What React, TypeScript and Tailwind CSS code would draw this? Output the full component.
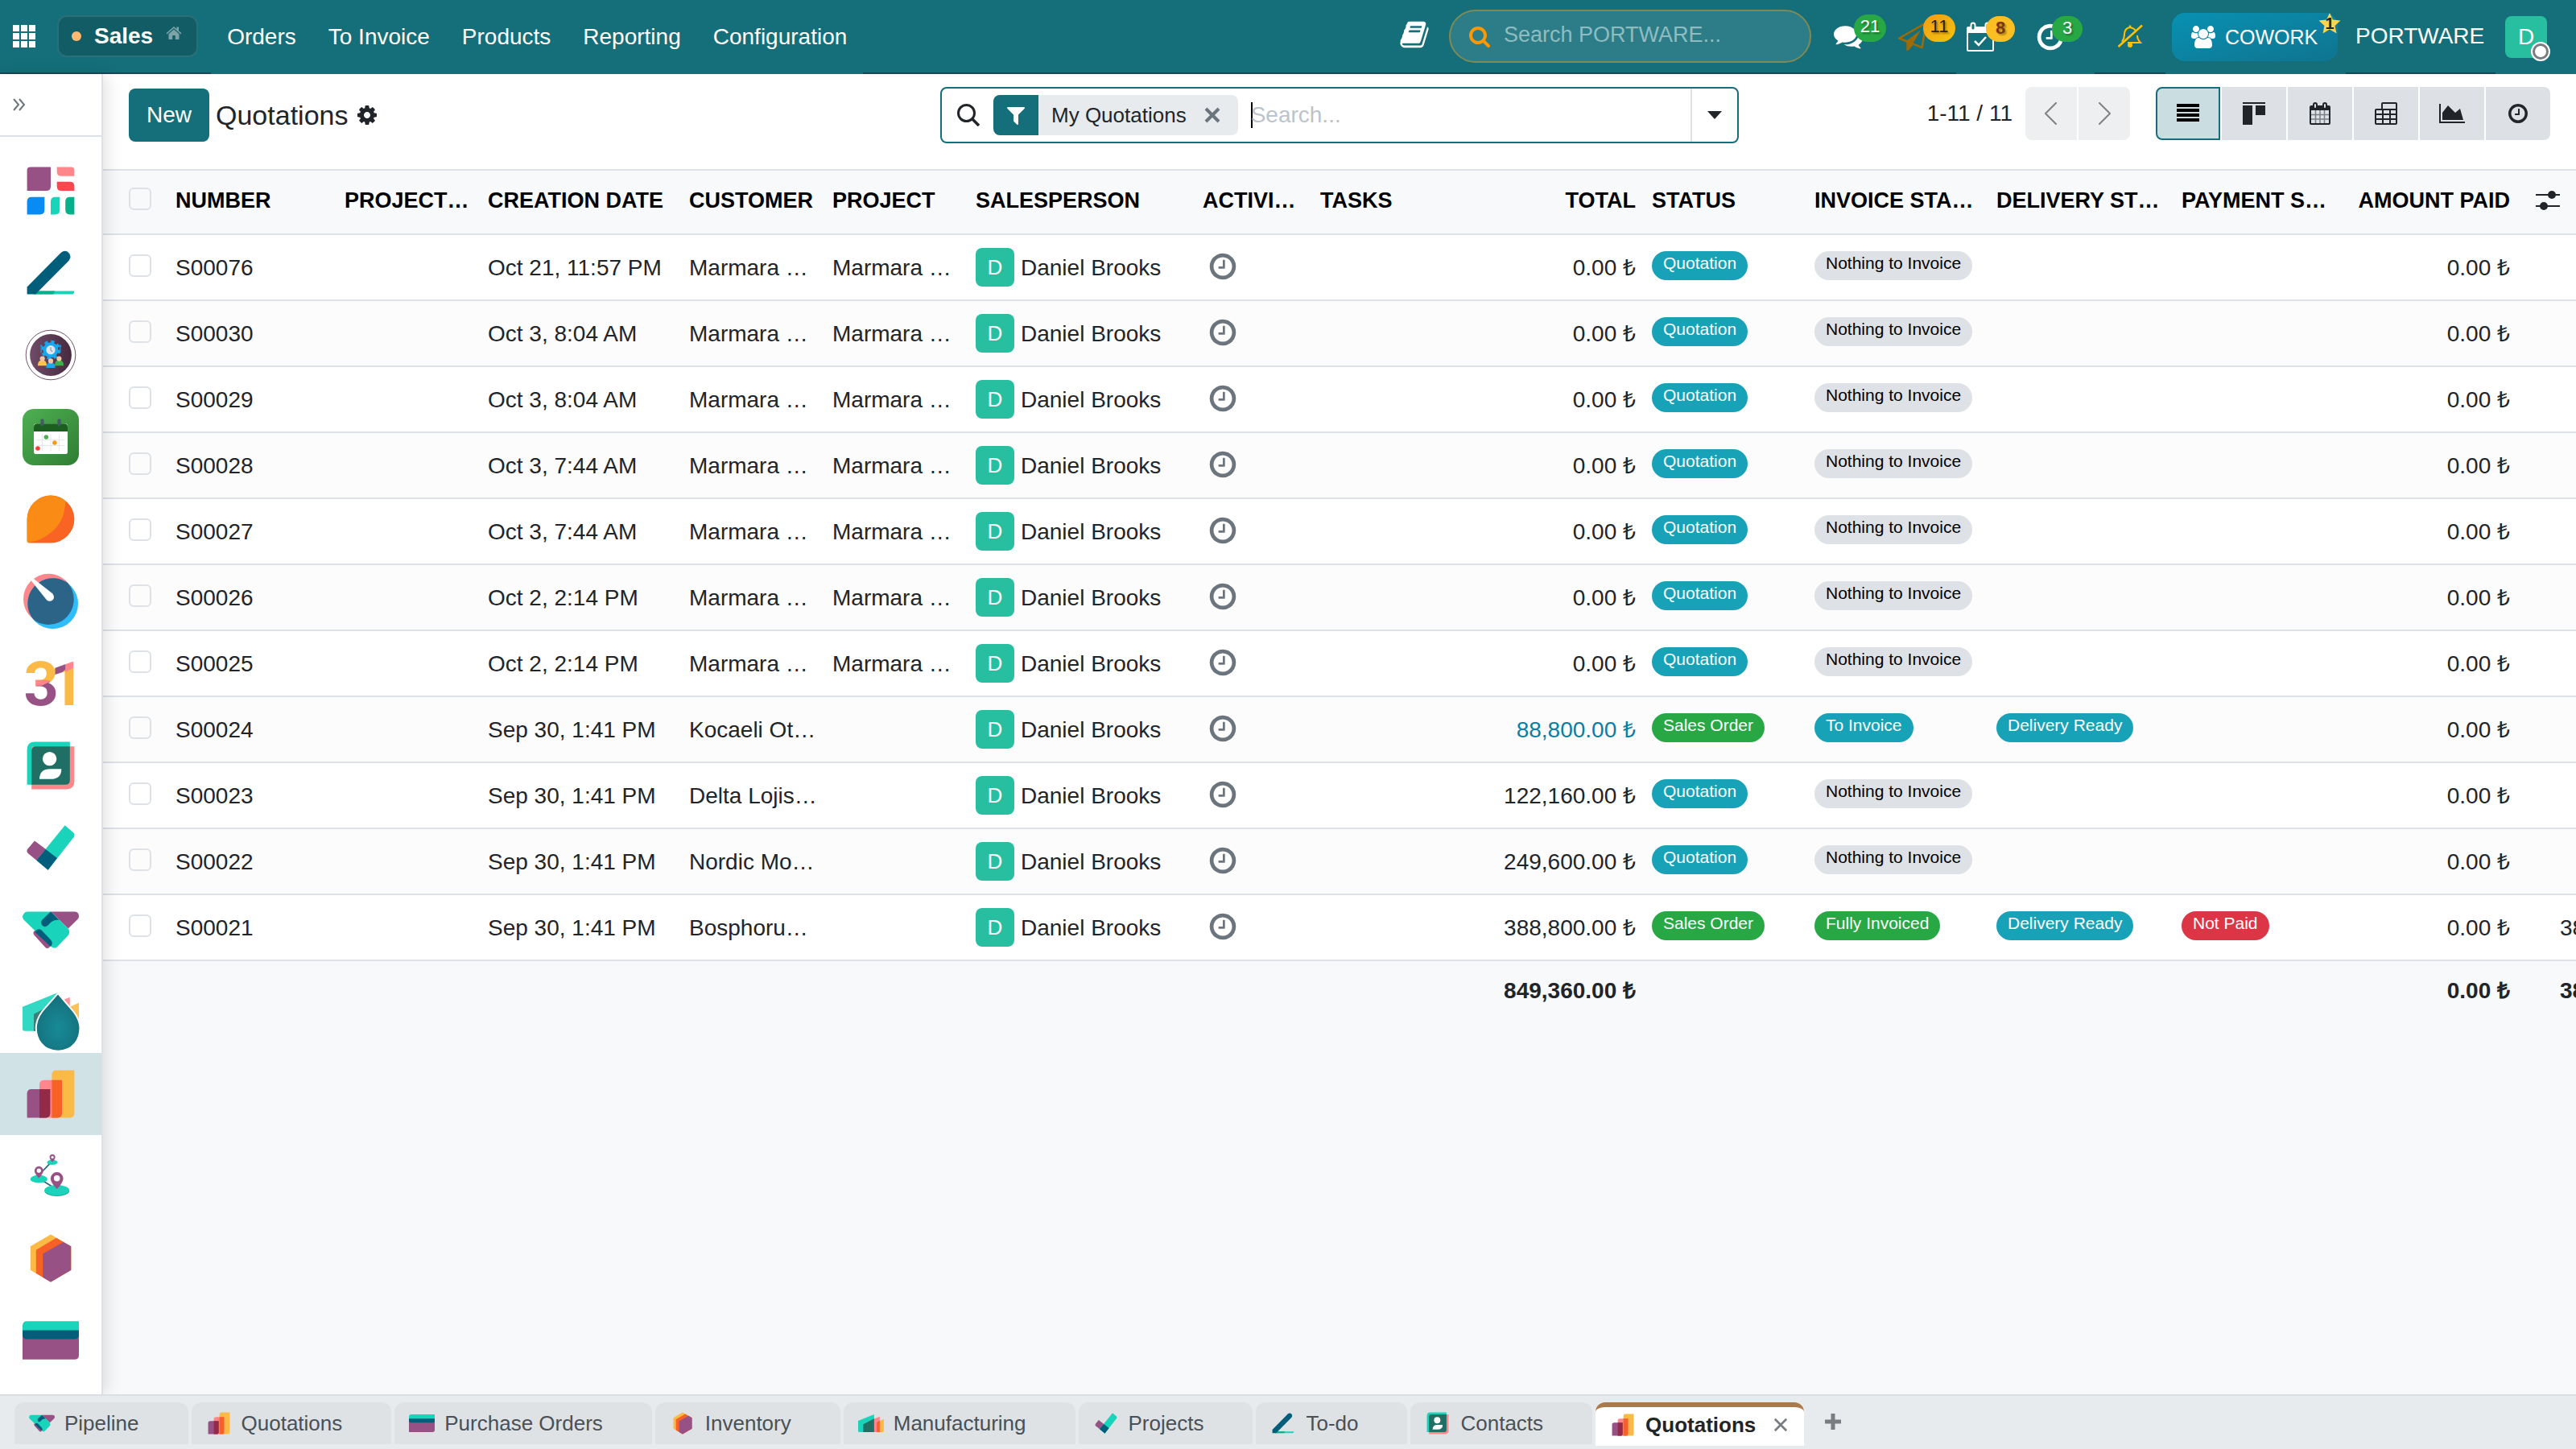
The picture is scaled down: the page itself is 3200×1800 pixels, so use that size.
import React from "react";

type IconProps = { className?: string };

/* ---------- single colour glyphs ---------- */

function Glyph({ d, box = "0 0 1792 1792", className = "" }: { d: string; box?: string; className?: string }) {
  return (
    <svg viewBox={box} fill="currentColor" className={className} aria-hidden="true">
      <path d={d} />
    </svg>
  );
}

const CLOCK =
  "M1024 544v448q0 14-9 23t-23 9h-320q-14 0-23-9t-9-23v-64q0-14 9-23t23-9h224v-352q0-14 9-23t23-9h64q14 0 23 9t9 23zm416 352q0-148-73-273t-198-198-273-73-273 73-198 198-73 273 73 273 198 198 273 73 273-73 198-198 73-273zm224 0q0 209-103 385.5t-279.5 279.5-385.5 103-385.5-103-279.5-279.5-103-385.5 103-385.5 279.5-279.5 385.5-103 385.5 103 279.5 279.5 103 385.5z";
const SEARCH =
  "M1216 832q0-185-131.5-316.5t-316.5-131.5-316.5 131.5-131.5 316.5 131.5 316.5 316.5 131.5 316.5-131.5 131.5-316.5zm512 832q0 52-38 90t-90 38q-54 0-90-38l-343-342q-179 124-399 124-143 0-273.5-55.5t-225-150-150-225-55.5-273.5 55.5-273.5 150-225 225-150 273.5-55.5 273.5 55.5 225 150 150 225 55.5 273.5q0 220-124 399l343 343q37 37 37 90z";
const FILTER =
  "M1595 295q17 41-14 70l-493 493v742q0 42-39 59-13 5-25 5-27 0-45-19l-256-256q-19-19-19-45v-486l-493-493q-31-29-14-70 17-39 59-39h1280q42 0 59 39z";
const COG =
  "M1152 896q0-106-75-181t-181-75-181 75-75 181 75 181 181 75 181-75 75-181zm512-109v222q0 12-8 23t-20 13l-185 28q-19 54-39 91 35 50 107 138 10 12 10 25t-9 23q-27 37-99 108t-94 71q-12 0-26-9l-138-108q-44 23-91 38-16 136-29 186-7 28-36 28h-222q-14 0-24.5-8.5t-11.5-21.5l-28-184q-49-16-90-37l-141 107q-10 9-25 9-14 0-25-11-126-114-165-168-7-10-7-23 0-12 8-23 15-21 51-66.5t54-70.5q-27-50-41-99l-183-27q-13-2-21-12.5t-8-23.5v-222q0-12 8-23t19-13l186-28q14-46 39-92-40-57-107-138-10-12-10-24 0-10 9-23 26-36 98.5-107.5t94.5-71.5q13 0 26 10l138 107q44-23 91-38 16-136 29-186 7-28 36-28h222q14 0 24.5 8.5t11.5 21.5l28 184q49 16 90 37l142-107q9-9 24-9 13 0 25 10 129 119 165 170 7 8 7 22 0 12-8 23-15 21-51 66.5t-54 70.5q26 50 41 98l183 28q13 2 21 12.5t8 23.5z";
const COMMENTS =
  "M1408 768q0 139-94 257t-256.5 186.5-353.5 68.5q-86 0-176-16-124 88-278 128-36 9-86 16h-3q-11 0-20.5-8t-11.5-21q-1-3-1-6.5t.5-6.5 2-6l2.5-5 3.5-5.5 4-5 4.5-5 4-4.5q5-6 23-25t26-29.5 22.5-29 25-38.5 20.5-44q-124-72-195-177t-71-224q0-139 94-257t256.5-186.5 353.5-68.5 353.5 68.5 256.5 186.5 94 257zm384 256q0 120-71 224.5t-195 176.5q10 24 20.5 44t25 38.5 22.5 29 26 29.5 23 25q1 1 4 4.5t4.5 5 4 5 3.5 5.5l2.5 5 2 6 .5 6.5-1 6.5q-3 14-13 22t-22 7q-50-7-86-16-154-40-278-128-90 16-176 16-271 0-472-132 58 4 88 4 161 0 309-45t264-129q125-92 192-212t67-254q0-77-23-152 129 71 204 178t75 230z";
const PLANE =
  "M1764 11q33 24 27 64l-256 1536q-5 29-32 45-14 8-31 8-11 0-24-5l-527-215-298 327q-18 21-47 21-14 0-23-4-19-7-30-23.5t-11-36.5v-452l-472-193q-37-14-40-55-3-39 32-59l1664-960q35-21 68 2zm-342 1499l221-1323-1434 827 336 137 863-639-478 797z";
const USERS =
  "M593 896q-162 5-265 128h-134q-82 0-138-40.5t-56-118.5q0-353 124-353 6 0 43.5 21t97.5 42.5 119 21.5q67 0 133-23-5 37-5 66 0 139 81 256zm1071 637q0 120-73 189.5t-194 69.5h-874q-121 0-194-69.5t-73-189.5q0-53 3.5-103.5t14-109 26.5-108.5 43-97.5 62-81 85.5-53.5 111.5-20q10 0 43 21.5t73 48 107 48 135 21.5 135-21.5 107-48 73-48 43-21.5q61 0 111.5 20t85.5 53.5 62 81 43 97.5 26.5 108.5 14 109 3.5 103.5zm-1024-1277q0 106-75 181t-181 75-181-75-75-181 75-181 181-75 181 75 75 181zm704 384q0 159-112.5 271.5t-271.5 112.5-271.5-112.5-112.5-271.5 112.5-271.5 271.5-112.5 271.5 112.5 112.5 271.5zm576 225q0 78-56 118.5t-138 40.5h-134q-103-123-265-128 81-117 81-256 0-29-5-66 66 23 133 23 59 0 119-21.5t97.5-42.5 43.5-21q124 0 124 353zm-128-609q0 106-75 181t-181 75-181-75-75-181 75-181 181-75 181 75 75 181z";
const BOOK =
  "M1703 478q40 57 18 129l-275 906q-19 64-76.5 107.5t-122.5 43.5h-923q-77 0-148.5-53.5t-99.5-131.5q-24-67-2-127 0-4 3-27t4-37q1-8-3-21.5t-3-19.5q2-11 8-21t16.5-23.5 16.5-23.5q23-38 45-91.5t30-91.5q3-10 .5-30t-.5-28q3-11 17-28t17-23q21-36 42-92t25-90q1-9-2.5-32t.5-28q4-13 22-30.5t22-22.5q19-26 42.5-84.5t27.5-96.5q1-8-3-25.5t-2-26.5q2-8 9-18t18-23 17-21q8-12 16.5-30.5t15-35 16-36 19.5-32 26.5-23.5 36-11.5 47.5 5.5l-1 3q38-9 51-9h761q74 0 114 56t18 130l-274 906q-36 119-71.5 153.5t-128.5 34.5h-869q-27 0-38 15-11 16-1 43 24 70 144 70h923q29 0 56-15.5t35-41.5l300-987q7-22 5-57 38 15 59 43zm-1064 2q-4 13 2 22.5t20 9.5h608q13 0 25.5-9.5t16.5-22.5l21-64q4-13-2-22.5t-20-9.5h-608q-13 0-25.5 9.5t-16.5 22.5zm-83 256q-4 13 2 22.5t20 9.5h608q13 0 25.5-9.5t16.5-22.5l21-64q4-13-2-22.5t-20-9.5h-608q-13 0-25.5 9.5t-16.5 22.5z";
const AREA = "M2048 1536v128h-2048v-1536h128v1408h1920zm-384-1024l256 896h-1664v-576l448-576 576 576z";

function Magnifier({ className }: IconProps) {
  return (
    <svg viewBox="0 0 28 28" fill="none" stroke="currentColor" strokeWidth="3" className={className} aria-hidden="true">
      <circle cx="11.500" cy="11.500" r="10" />
      <path d="M18.500 18.500L27 27" strokeWidth="3.500" />
    </svg>
  );
}

function CalendarCheck({ className }: IconProps) {
  return (
    <svg viewBox="0 0 36 38" className={className} aria-hidden="true">
      <path fill="currentColor" fillRule="evenodd" d="M3 6h30q2 0 2 2v27q0 2-2 2H3q-2 0-2-2V8q0-2 2-2zm0 8v21h30V14z" />
      <rect x="6.500" y="1.500" width="5" height="9" rx="2.500" fill="#146f7a" stroke="currentColor" strokeWidth="2" />
      <rect x="24.500" y="1.500" width="5" height="9" rx="2.500" fill="#146f7a" stroke="currentColor" strokeWidth="2" />
      <path d="M11 24l5 5 9-10" fill="none" stroke="currentColor" strokeWidth="2.500" />
    </svg>
  );
}

function BellSlash({ className }: IconProps) {
  return (
    <svg viewBox="0 0 32 30" fill="none" stroke="currentColor" strokeWidth="2" className={className} aria-hidden="true">
      <path d="M6 22q3-4 3-9 0-8 7-9 5 1 7 4M25 14q0 5 4 9H13" />
      <path d="M16 4V1.500M1.500 28L31 1.500" strokeWidth="2.500" />
      <circle cx="16" cy="26" r="3" fill="currentColor" stroke="none" />
    </svg>
  );
}

function Home({ className }: IconProps) {
  return (
    <svg viewBox="0 0 20 18" fill="currentColor" className={className} aria-hidden="true">
      <path d="M10 4.500l6.500 5.800V17h-4.700v-5H8.200v5H3.500v-6.700z" />
      <path d="M10 1l3.500 3V1.500h2.500v4.700L19.500 9.300l-1 1.200L10 3 1.500 10.500l-1-1.200z" />
    </svg>
  );
}

function AppsGrid({ className }: IconProps) {
  return (
    <svg viewBox="0 0 28 28" fill="currentColor" className={className} aria-hidden="true">
      {[0, 10, 20].map((y) => [0, 10, 20].map((x) => <rect key={`${x}-${y}`} x={x} y={y} width="8" height="8" />))}
    </svg>
  );
}

function ListView({ className }: IconProps) {
  return (
    <svg viewBox="0 0 28 28" fill="#000" className={className} aria-hidden="true">
      {[2, 8, 14, 20].map((y) => <rect key={y} y={y} width="28" height="4" />)}
    </svg>
  );
}

function KanbanView({ className }: IconProps) {
  return (
    <svg viewBox="0 0 28 28" fill="currentColor" className={className} aria-hidden="true">
      <path d="M0 0h28v2H0zM0 4h12v24H0zM16 4h12v12H16z" />
    </svg>
  );
}

function CalendarView({ className }: IconProps) {
  return (
    <svg viewBox="0 0 28 28" className={className} aria-hidden="true">
      <path fill="currentColor" fillRule="evenodd" d="M3 4h22q2 0 2 2v20q0 2-2 2H3q-2 0-2-2V6q0-2 2-2zm0 6v16h22V10z" />
      <path d="M8.500 10v16M14 10v16M19.500 10v16M3 15.500h22M3 21h22" stroke="#7a7f85" strokeWidth="1.500" />
      <rect x="6" y="1" width="4" height="7" rx="2" fill="#dde1e6" stroke="currentColor" strokeWidth="2" />
      <rect x="18" y="1" width="4" height="7" rx="2" fill="#dde1e6" stroke="currentColor" strokeWidth="2" />
    </svg>
  );
}

function PivotView({ className }: IconProps) {
  return (
    <svg viewBox="0 0 28 28" fill="none" stroke="currentColor" strokeWidth="2" className={className} aria-hidden="true">
      <path d="M9 9V2q0-1 1-1h16q1 0 1 1v24q0 1-1 1H2q-1 0-1-1V10q0-1 1-1h25M1 15h26M1 21h26M10 9v18M19 9v18" />
    </svg>
  );
}

function Sliders({ className }: IconProps) {
  return (
    <svg viewBox="0 0 30 26" fill="currentColor" className={className} aria-hidden="true">
      <path d="M0 5h30v2H0zM0 19h30v2H0z" />
      <ellipse cx="20" cy="6" rx="5" ry="5" />
      <ellipse cx="10" cy="20" rx="5" ry="5" />
    </svg>
  );
}

function Chevron({ flip = false }: { flip?: boolean }) {
  return (
    <svg viewBox="0 0 16 28" fill="none" stroke="#808285" strokeWidth="2" strokeLinecap="round" className="h-7 w-4" aria-hidden="true">
      <path d={flip ? "M2 1l13 13L2 27" : "M14 1L1 14l13 13"} />
    </svg>
  );
}

function Cross({ className }: IconProps) {
  return (
    <svg viewBox="0 0 20 20" stroke="currentColor" className={className} aria-hidden="true">
      <path d="M2 2l16 16M18 2L2 18" />
    </svg>
  );
}

/* ---------- application icons ---------- */

const app = (children: React.ReactNode) =>
  function AppIcon({ className }: IconProps) {
    return (
      <svg viewBox="0 0 50 50" className={className} overflow="visible" aria-hidden="true">
        {children}
      </svg>
    );
  };

const Dashboards = app(
  <>
    <path fill="#985184" d="M7 4h18v17q0 4-4 4H4V7q0-3 3-3z" />
    <path fill="#ff868b" d="M30.500 4H43q3 0 3 3v5H34.500q-4 0-4-4z" />
    <path fill="#ff464e" d="M30.500 17H42q4 0 4 4v4H34.500q-4 0-4-4z" />
    <path fill="#088bf5" d="M8 30.500h11.500V42q0 4-4 4H4V34.500q0-4 4-4z" />
    <path fill="#1ad3bb" d="M29 30.500h4V42q0 4-4 4h-4V34.500q0-4 4-4z" />
    <path fill="#05b08a" d="M42 30.500h4V46h-4q-4 0-4-4v-7.500q0-4 4-4z" />
  </>
);

const Todo = app(
  <>
    <path fill="#1ad3bb" d="M12 41h34q0 3-3 3H10z" />
    <path fill="#05b08a" d="M12 41h16.500q0 3-3 3H10z" />
    <path fill="#005e7a" d="M4 37.500L34 7.200q4-3.200 7 0 3 3.500 0 7L11.500 44H4z" />
  </>
);

const Workforce = app(
  <>
    <defs>
      <linearGradient id="workforce-disc">
        <stop offset="0" stopColor="#704c67" />
        <stop offset="1" stopColor="#46293f" />
      </linearGradient>
    </defs>
    <circle cx="25" cy="25" r="22" fill="#fff" stroke="#70506a" strokeWidth="0.700" />
    <circle cx="25" cy="25" r="18.500" fill="url(#workforce-disc)" />
    <circle cx="25" cy="20.500" r="7.300" fill="none" stroke="#18a8ef" strokeWidth="2.600" strokeDasharray="3 2.730" />
    <circle cx="25" cy="20.500" r="6.800" fill="#18a8ef" />
    <circle cx="25" cy="20.500" r="4" fill="#dfe5ea" />
    <path d="M25 18v2.500l1.500 1.500" fill="none" stroke="#8b98a5" strokeWidth="0.800" />
    <path d="M16.500 17v6M33.500 17v6" stroke="#2196d8" strokeWidth="0.900" />
    <path d="M15.200 17.500l1.300-2 1.300 2zM32.200 17.500l1.300-2 1.300 2z" fill="#2196d8" />
    <path fill="#fdc34f" d="M13.500 34.500q0-5 4-5t4 5z" />
    <path fill="#35b44a" d="M28.500 34.500q0-5 4-5t4 5z" />
    <path fill="#18a8ef" d="M21 36.500q0-5 4-5t4 5z" />
    <circle cx="17.600" cy="28.300" r="2.200" fill="#f1c8a5" />
    <circle cx="32.400" cy="28.300" r="2.200" fill="#f1c8a5" />
    <circle cx="25" cy="30.300" r="2.200" fill="#f1c8a5" />
  </>
);

const Planner = app(
  <>
    <defs>
      <linearGradient id="planner-tile" x1="0" y1="0" x2="1" y2="1">
        <stop offset="0" stopColor="#4fb053" />
        <stop offset="1" stopColor="#2e7d32" />
      </linearGradient>
    </defs>
    <rect width="50" height="50" rx="10" fill="url(#planner-tile)" />
    <rect x="10" y="13" width="30" height="27" rx="2" fill="#fff" />
    <path fill="#1b5e20" d="M10 20v-4q0-3 3-3h24q3 0 3 3v4z" />
    <path d="M12.500 27.500h25M12.500 32.500h25M17.500 22.500v15M25 22.500v15M32.500 22.500v15" stroke="#e4e6e8" strokeWidth="0.700" />
    <rect x="16" y="9" width="3" height="6" rx="1" fill="#455a64" />
    <rect x="31" y="9" width="3" height="6" rx="1" fill="#455a64" />
    <circle cx="21" cy="25" r="2" fill="#4caf50" />
    <circle cx="28.500" cy="30" r="2" fill="#ff9800" />
    <circle cx="13.500" cy="35" r="2" fill="#f44336" />
  </>
);

const Discuss = app(
  <>
    <path fill="#f96425" d="M25 4a21 21 0 0 1 0 42H6q-2 0-2-2V25A21 21 0 0 1 25 4z" />
    <path fill="#fa8b14" d="M25 4q7 0 13 4.500Q38 26 26 36 17 44 5 45.800 4 45 4 44V25A21 21 0 0 1 25 4z" />
  </>
);

const Gauge = app(
  <>
    <circle cx="23.100" cy="23" r="22.400" fill="#ff868b" />
    <circle cx="26.900" cy="27" r="22.400" fill="#2ebcfa" />
    <path fill="#2c6488" d="M4.700 24.500A22.400 22.400 0 0 1 40 8.600 22.400 22.400 0 0 1 45.400 25.500 22.400 22.400 0 0 1 10 41.400 22.400 22.400 0 0 1 4.700 24.500z" />
    <path d="M7.500 6.500l2-1.800L26.500 18q2.500 3 .5 5.500-2.500 2.500-5.500.5z" fill="#fff" />
  </>
);

const Calendar = app(
  <>
    <defs>
      <clipPath id="calendar-day">
        <text x="1" y="44" fontSize="54" fontWeight="700" fontFamily="Roboto, sans-serif">3</text>
        <text x="24" y="44" fontSize="54" fontWeight="700" fontFamily="Roboto, sans-serif">1</text>
      </clipPath>
    </defs>
    <g clipPath="url(#calendar-day)">
      <rect width="50" height="50" fill="#fbb945" />
      <path fill="#985184" d="M0 32h12V27l10-4 8 2v25H0z" />
      <path fill="#ff868b" d="M8 22h14l3 1-8 4H8z" />
      <path fill="#985184" d="M29 0h10v12l-10 8z" />
      <path fill="#ff868b" d="M38 0h12v9l-12 6z" />
    </g>
  </>
);

const Contacts = app(
  <>
    <path fill="#1ad3bb" d="M11 4h31v38H4V11q0-7 7-7z" />
    <path fill="#ff868b" d="M8 8h38v31q0 7-7 7H8z" />
    <path fill="#1f6f65" d="M12 8h30v30q0 4-4 4H8V12q0-4 4-4z" />
    <circle cx="24" cy="19" r="6.200" fill="#fff" />
    <path fill="#fff" d="M15 37q0-9 9.500-9h10q0 9-9.500 9z" />
  </>
);

const Projects = app(
  <>
    <path fill="#1ad3bb" d="M37.600 5.200l7.600 6.600q1.500 1.500.5 3.500L22.600 44.800l-10.200-8.600z" />
    <path fill="#985184" d="M10.700 18.900l10 7.600-8.300 9.700-7.600-6.200q-1.500-1.500-.5-3.500z" />
    <path fill="#005e7a" d="M20.500 26.500l10.200 7.800-8.100 10.500-10.200-8.600z" />
  </>
);

const Pipeline = app(
  <>
    <path fill="#985184" d="M25 9h21q4 0 4 4 0 1.500-1 2.500l-8.500 8.500z" />
    <path d="M12.500 28l9.500 10.500" stroke="#985184" strokeWidth="5.500" strokeLinecap="round" />
    <path fill="#1ad3bb" d="M4 9h21l15.500 15q2 3 0 6L30.500 40.300q-2 1.700-4.500 0L1 16q-2-3 0-5 1-2 3-2z" />
    <path fill="#005e7a" d="M25 9l7.500 7.500q-4-1-7 1.500l-3 3q-3 2.500-5 0-2-2.500 0-5z" />
    <path fill="#005e7a" d="M11 27q2.500-4 6-1.500l8 8.500q2.500 3 0 6z" />
  </>
);

const Manufacturing = app(
  <>
    <path fill="#fbb945" d="M36 23l14-6v23q0 2-2 2H36z" />
    <path fill="#ff868b" d="M22 20l20-8v30H22z" />
    <path fill="#f86126" d="M36 23l6-3v22h-6z" />
    <path fill="#1ad3bb" d="M0 20.500L31 8v34H2q-2 0-2-2z" />
    <path fill="#1f6f65" d="M10 27l21-11v26H10z" />
  </>
);

const Sales = app(
  <>
    <path fill="#fbb945" d="M30 4h16v38q0 4-4 4H26V8q0-4 4-4z" />
    <path fill="#ff868b" d="M19 12.700h16V42q0 4-4 4H15V16.700q0-4 4-4z" />
    <path fill="#f86126" d="M26 12.700h9V42q0 4-4 4h-5z" />
    <path fill="#985184" d="M8 20.700h16.500V42q0 4-4 4H4V24.700q0-4 4-4z" />
    <path fill="#932b48" d="M15 20.700h9.500V42q0 4-4 4H15z" />
  </>
);

const Routes = app(
  <>
    <path d="M14.500 24L26 12M14.500 27l16 10" stroke="#2c6488" strokeWidth="1.200" />
    <ellipse cx="26.400" cy="12.800" rx="4.700" ry="2.200" fill="#1ad3bb" />
    <ellipse cx="14.500" cy="27.600" rx="7.600" ry="3.500" fill="#1ad3bb" />
    <ellipse cx="30.500" cy="38.200" rx="11" ry="4.600" fill="#17a593" />
    <ellipse cx="30.500" cy="37.500" rx="11" ry="4.600" fill="#1ad3bb" />
    <path fill="#985184" fillRule="evenodd" d="M26.500 12.500q-2.500-2.500-2.500-4.200a2.500 2.500 0 0 1 5 0q0 1.700-2.500 4.200zm0-5.400a1.200 1.200 0 1 0 0 2.400 1.200 1.200 0 0 0 0-2.400z" />
    <path fill="#985184" fillRule="evenodd" d="M14.500 26.800q-3.900-4-3.900-6.600a3.900 3.900 0 0 1 7.800 0q0 2.600-3.900 6.600zm0-8.600a1.900 1.900 0 1 0 0 3.800 1.900 1.900 0 0 0 0-3.800z" />
    <path fill="#985184" fillRule="evenodd" d="M30.500 36.500q-5.600-6-5.600-9.400a5.600 5.600 0 0 1 11.200 0q0 3.400-5.600 9.400zm0-12.200a2.700 2.700 0 1 0 0 5.400 2.700 2.700 0 0 0 0-5.400z" />
  </>
);

const Inventory = app(
  <>
    <path fill="#fbb945" d="M25 4l18 10.500v21L25 46 7 35.500v-21z" />
    <path fill="#f86126" d="M30 7l13 7.500v21L25 46l-13-7.600V17.700z" />
    <path fill="#985184" d="M36.200 10.700L43 14.500v21L25 46l-7-4V21z" />
  </>
);

const Purchase = app(
  <>
    <path fill="#985184" d="M0 16h50v22q0 4-4 4H0z" />
    <path fill="#1ad3bb" d="M4 8h46v10H0v-6q0-4 4-4z" />
    <path fill="#005e7a" d="M0 16h50v4q0 4-4 4H4q-4 0-4-4z" />
  </>
);

const ManufacturingDrop = app(
  <>
    <defs>
      <radialGradient id="drop-fill" cx="0.500" cy="0.600" r="0.600">
        <stop offset="0" stopColor="#178a97" />
        <stop offset="1" stopColor="#146f7a" />
      </radialGradient>
    </defs>
    <path fill="#fbc25c" d="M36 23l14-6v23q0 2-2 2H36z" />
    <path fill="#ff959a" d="M22 20l20-8v30H22z" />
    <path fill="#31d8c3" d="M0 20.500L31 8v34H2q-2 0-2-2z" />
    <path fill="#3b8078" d="M10 27l21-11v26H10z" />
    <path fill="url(#drop-fill)" stroke="#fff" strokeWidth="1.400" d="M31.400 8.500q2 2.500 10.600 12.500 9 9.500 9 18.500 0 8-4.500 13.500-5.500 6.800-15 6.800t-15-6.800Q12 47.500 12 39.500 12 30 20.500 21q8.900-10 10.900-12.500z" />
  </>
);

const SIDEBAR: { name: string; Icon: React.FC<IconProps> }[] = [
  { name: "Dashboards", Icon: Dashboards },
  { name: "To-do", Icon: Todo },
  { name: "Workforce", Icon: Workforce },
  { name: "Planner", Icon: Planner },
  { name: "Discuss", Icon: Discuss },
  { name: "Gauge", Icon: Gauge },
  { name: "Calendar", Icon: Calendar },
  { name: "Contacts", Icon: Contacts },
  { name: "Projects", Icon: Projects },
  { name: "CRM", Icon: Pipeline },
  { name: "Manufacturing", Icon: ManufacturingDrop },
  { name: "Sales", Icon: Sales },
  { name: "Routes", Icon: Routes },
  { name: "Inventory", Icon: Inventory },
  { name: "Purchase", Icon: Purchase },
];

const TABS: { name: string; Icon: React.FC<IconProps> }[] = [
  { name: "Pipeline", Icon: Pipeline },
  { name: "Quotations", Icon: Sales },
  { name: "Purchase Orders", Icon: Purchase },
  { name: "Inventory", Icon: Inventory },
  { name: "Manufacturing", Icon: Manufacturing },
  { name: "Projects", Icon: Projects },
  { name: "To-do", Icon: Todo },
  { name: "Contacts", Icon: Contacts },
];

/* ---------- header ---------- */

function Header() {
  return (
    <header className="flex h-[92px] shrink-0 bg-[#146f7a] text-[28px] text-white">
      <div className="flex items-center gap-[27px] border-b-2 border-[#0f4b53] pr-4 pl-4">
        <button aria-label="Apps"><AppsGrid className="size-7" /></button>
        <a href="#sales" className="flex h-[52px] items-center gap-4 rounded-xl border-2 border-[#2a6f78] bg-[#115c65] pr-[18px] pl-4 font-bold">
          <span className="size-3 rounded-full bg-[#ffb870]" />
          Sales
          <Home className="mb-2 h-[18px] w-5 text-[#7ba3a8]" />
        </a>
      </div>
      <nav className="flex">
        {["Orders", "To Invoice", "Products", "Reporting", "Configuration"].map((m) => (
          <button key={m} className="h-full px-5">{m}</button>
        ))}
      </nav>
      <div className="flex grow items-center justify-end border-b-2 border-[#0f4b53]">
        <button aria-label="Documentation" className="mr-6 mb-1"><Glyph d={BOOK} className="size-[38px]" /></button>
        <label className="mr-4 flex h-[66px] w-[450px] items-center gap-4 rounded-[33px] border-2 border-[#7f8a55] bg-[#2c7d87] pl-[22px]">
          <Glyph d={SEARCH} className="size-7 shrink-0 text-[#ff9800]" />
          <input aria-label="Search PORTWARE" placeholder="Search PORTWARE..." className="w-full min-w-0 bg-transparent pb-1 text-[27px] outline-none placeholder:text-[#8fbcc1]" />
        </label>
        <button aria-label="Messages" className="relative flex h-full w-20 items-center pl-3">
          <Glyph d={COMMENTS} className="size-9" />
          <span className="absolute top-[18px] left-[37px] flex h-[34px] w-10 items-center justify-center rounded-full bg-[#28a745] pb-1 text-[22px] [text-shadow:2px_2px_2px_rgb(0_0_0/0.3)]">21</span>
        </button>
        <button aria-label="Requests" className="relative flex h-full w-[84px] items-center pl-3">
          <Glyph d={PLANE} className="size-9 text-[#9c6a06]" />
          <span className="absolute top-[18px] left-[43px] flex h-[34px] w-10 items-center justify-center rounded-full bg-gradient-to-br from-[#f39c12] to-[#f1c40f] pb-1 text-[22px] text-[#212529] [text-shadow:2px_2px_2px_rgb(0_0_0/0.3)]">11</span>
        </button>
      </div>
      <div className="flex">
        <button aria-label="Meetings" className="relative flex h-full w-[86px] items-center pl-3">
          <CalendarCheck className="h-[38px] w-9" />
          <span className="absolute top-5 left-[37px] flex h-8 w-9 items-center justify-center rounded-full bg-[#fbbf24] pb-0.5 text-[22px] font-bold text-[#78350f] [text-shadow:2px_2px_2px_rgb(0_0_0/0.3)]">8</span>
        </button>
        <button aria-label="Activities" className="relative flex h-full w-[86px] items-center pl-3">
          <Glyph d={CLOCK} className="size-[38px]" />
          <span className="absolute top-5 left-[33px] flex h-8 w-[38px] items-center justify-center rounded-full bg-[#28a745] pb-0.5 text-[22px] [text-shadow:2px_2px_2px_rgb(0_0_0/0.3)]">3</span>
        </button>
      </div>
      <button aria-label="Notifications off" className="flex w-[88px] items-center justify-center border-b-2 border-[#0f4b53] text-[#ffc107]">
        <BellSlash className="h-[30px] w-8" />
      </button>
      <div className="flex items-center pr-2.5 pl-2">
        <button className="relative flex h-[60px] w-[206px] items-center gap-3 rounded-2xl bg-gradient-to-br from-[#0891b2] to-[#0e7490] pl-6 text-[25px]">
          <Glyph d={USERS} box="0 0 1920 1792" className="h-7 w-[30px]" />
          COWORK
          <span className="absolute -top-px -right-1 flex size-7 items-center justify-center text-[20px] font-bold text-[#212529]">
            <svg viewBox="0 0 28 28" fill="#ffd54f" className="absolute size-7" aria-hidden="true">
              <path d="M14 1l4 8.500 9.500 1-7 6.500 2 9.500-8.500-5-8.500 5 2-9.500-7-6.500 9.500-1z" />
            </svg>
            <span className="relative">1</span>
          </span>
        </button>
      </div>
      <button className="w-[186px] border-b-2 border-[#0f4b53] pl-3 text-left">PORTWARE</button>
      <button aria-label="Account" className="flex items-center pr-9 pl-3">
        <span className="relative flex size-[52px] items-center justify-center rounded-lg bg-[#27bf9f]">
          D
          <span className="absolute -right-1 -bottom-1 size-6 rounded-full border-2 border-white bg-[#797c80] p-[3px]">
            <span className="block size-full rounded-full bg-white" />
          </span>
        </span>
      </button>
    </header>
  );
}

/* ---------- control panel ---------- */

const VIEWS = [
  { name: "Kanban", icon: <KanbanView className="size-7" /> },
  { name: "Calendar", icon: <CalendarView className="size-7" /> },
  { name: "Pivot", icon: <PivotView className="size-7" /> },
  { name: "Graph", icon: <Glyph d={AREA} box="0 0 2048 1792" className="h-7 w-8" /> },
  { name: "Activity", icon: <Glyph d={CLOCK} className="size-7" /> },
];

function ControlPanel() {
  return (
    <div className="grid h-[118px] shrink-0 grid-cols-[1fr_992px_1fr] bg-white px-8 pt-4">
      <div className="flex h-[70px] items-center gap-2">
        <button className="h-[66px] rounded-lg bg-[#146f7a] px-[22px] text-white">New</button>
        <h1 className="text-[34px]">Quotations</h1>
        <button aria-label="Actions" className="ml-0.5"><Glyph d={COG} className="size-7" /></button>
      </div>
      <div className="flex h-[70px] items-center rounded-lg border-2 border-[#146f7a] pl-[19px]">
        <Magnifier className="size-7" />
        <span className="ml-[17px] flex h-[50px] items-center overflow-hidden rounded-lg bg-[#e7ebee] text-[26px]">
          <span className="flex h-full w-14 items-center justify-center bg-[#146f7a] text-white">
            <Glyph d={FILTER} className="size-7" />
          </span>
          <span className="pl-4">My Quotations</span>
          <button aria-label="Remove filter" className="px-[22px] text-[#6c757d]"><Cross className="size-5 stroke-[4]" /></button>
        </span>
        <span className="ml-4 h-8 w-0.5 bg-black" />
        <input aria-label="Search" placeholder="Search..." className="-ml-0.5 w-0 grow bg-transparent outline-none placeholder:text-[#bcc3ca]" />
        <button aria-label="Search options" className="flex h-full w-[58px] items-center justify-center border-l-2 border-[#dee2e6]">
          <svg viewBox="0 0 18 10" fill="currentColor" className="h-2.5 w-[18px]" aria-hidden="true"><path d="M0 0h18L9 10z" /></svg>
        </button>
      </div>
      <div className="flex h-[66px] items-center justify-end">
        <span>1-11 / 11</span>
        <div className="ml-4 flex h-full gap-0.5">
          <button aria-label="Previous" className="flex w-16 items-center justify-center rounded-l-lg bg-[#eeeff1]"><Chevron /></button>
          <button aria-label="Next" className="flex w-16 items-center justify-center rounded-r-lg bg-[#eeeff1]"><Chevron flip /></button>
        </div>
        <div className="ml-8 flex h-full gap-0.5">
          <button aria-label="List" className="flex w-20 items-center justify-center rounded-l-lg border-2 border-[#146f7a] bg-[#cadde0]"><ListView className="size-7" /></button>
          {VIEWS.map((v) => (
            <button key={v.name} aria-label={v.name} className="flex w-20 items-center justify-center bg-[#dde1e6] last:rounded-r-lg">{v.icon}</button>
          ))}
        </div>
      </div>
    </div>
  );
}

/* ---------- table ---------- */

type Tone = "info" | "success" | "muted" | "danger";
const TONES: Record<Tone, string> = {
  info: "bg-[#17a2b8] text-white",
  success: "bg-[#28a745] text-white",
  muted: "bg-[#dee2e6] text-black",
  danger: "bg-[#dc3545] text-white",
};

function Badge({ tone, children }: { tone: Tone; children: string }) {
  return <span className={`mb-1 block h-9 w-fit rounded-full px-[14px] pt-1 text-[21px] leading-[21px] ${TONES[tone]}`}>{children}</span>;
}

type Row = {
  number: string; date: string; customer: string; project?: string; total: string;
  link?: boolean; sale?: boolean; invoice: [Tone, string]; delivery?: string; payment?: string; due?: string;
};
const NTI: [Tone, string] = ["muted", "Nothing to Invoice"];
const marmara = (number: string, date: string): Row => ({ number, date, customer: "Marmara …", project: "Marmara …", total: "0.00 ₺", invoice: NTI });
const SEP = "Sep 30, 1:41 PM";

const ROWS: Row[] = [
  marmara("S00076", "Oct 21, 11:57 PM"),
  marmara("S00030", "Oct 3, 8:04 AM"),
  marmara("S00029", "Oct 3, 8:04 AM"),
  marmara("S00028", "Oct 3, 7:44 AM"),
  marmara("S00027", "Oct 3, 7:44 AM"),
  marmara("S00026", "Oct 2, 2:14 PM"),
  marmara("S00025", "Oct 2, 2:14 PM"),
  { number: "S00024", date: SEP, customer: "Kocaeli Ot…", total: "88,800.00 ₺", link: true, sale: true, invoice: ["info", "To Invoice"], delivery: "Delivery Ready" },
  { number: "S00023", date: SEP, customer: "Delta Lojis…", total: "122,160.00 ₺", invoice: NTI },
  { number: "S00022", date: SEP, customer: "Nordic Mo…", total: "249,600.00 ₺", invoice: NTI },
  { number: "S00021", date: SEP, customer: "Bosphoru…", total: "388,800.00 ₺", sale: true, invoice: ["success", "Fully Invoiced"], delivery: "Delivery Ready", payment: "Not Paid", due: "388,800.00 ₺" },
];

function Tick({ label }: { label: string }) {
  return <input type="checkbox" aria-label={label} className="mb-1 block size-7 appearance-none rounded-md border-2 border-[#dee2e6]" />;
}

const TD = "px-2.5";
const TEXT = "px-2.5 pt-0.5";
const MONEY = "px-2.5 pt-0.5 text-right";

function QuotationTable() {
  return (
    <table className="w-full table-fixed border-separate border-spacing-0 text-left whitespace-nowrap">
      <colgroup>
        <col className="w-[80px]" />
        <col className="w-[210px]" />
        <col className="w-[178px]" />
        <col className="w-[250px]" />
        <col className="w-[178px]" />
        <col className="w-[178px]" />
        <col className="w-[282px]" />
        <col className="w-[146px]" />
        <col />
        <col className="w-[190px]" />
        <col className="w-[202px]" />
        <col className="w-[226px]" />
        <col className="w-[230px]" />
        <col className="w-[208px]" />
        <col className="w-[220px]" />
        <col className="w-[72px]" />
      </colgroup>
      <thead className="text-[27px] text-black">
        <tr className="h-[82px] [&>th]:border-y-2 [&>th]:border-[#dee2e6] [&>th]:pb-1">
          <th className="pl-8"><Tick label="Select all" /></th>
          <th className={TD}>NUMBER</th>
          <th className={TD}>PROJECT…</th>
          <th className={TD}>CREATION DATE</th>
          <th className={TD}>CUSTOMER</th>
          <th className={TD}>PROJECT</th>
          <th className={TD}>SALESPERSON</th>
          <th className={TD}>ACTIVI…</th>
          <th className={TD}>TASKS</th>
          <th className="px-2.5 text-right">TOTAL</th>
          <th className={TD}>STATUS</th>
          <th className={TD}>INVOICE STA…</th>
          <th className={TD}>DELIVERY ST…</th>
          <th className={TD}>PAYMENT S…</th>
          <th className="px-2.5 text-right">AMOUNT PAID</th>
          <th className="pl-[22px]"><button aria-label="Columns" className="block text-[#212529]"><Sliders className="h-[26px] w-[30px]" /></button></th>
        </tr>
      </thead>
      <tbody>
        {ROWS.map((r) => (
          <tr key={r.number} className="h-[82px] bg-white even:bg-[#fcfcfc] [&>td]:border-b-2 [&>td]:border-[#dee2e6]">
            <td className="pl-8"><Tick label={`Select ${r.number}`} /></td>
            <td className={TEXT}>{r.number}</td>
            <td />
            <td className={TEXT}>{r.date}</td>
            <td className={TEXT}>{r.customer}</td>
            <td className={TEXT}>{r.project}</td>
            <td className={TD}>
              <span className="flex items-center gap-2">
                <span className="flex size-12 items-center justify-center rounded-lg bg-[#27bf9f] text-[26px] text-white">D</span>
                <span className="pt-0.5">Daniel Brooks</span>
              </span>
            </td>
            <td className="pl-4">
              <button aria-label="Schedule activity" className="mb-0.5 block text-[#6c757d]"><Glyph d={CLOCK} className="size-[38px]" /></button>
            </td>
            <td />
            <td className={r.link ? "px-2.5 pt-0.5 text-right text-[#0a7ea4]" : MONEY}>{r.total}</td>
            <td className={TD}>{r.sale ? <Badge tone="success">Sales Order</Badge> : <Badge tone="info">Quotation</Badge>}</td>
            <td className={TD}><Badge tone={r.invoice[0]}>{r.invoice[1]}</Badge></td>
            <td className={TD}>{r.delivery && <Badge tone="info">{r.delivery}</Badge>}</td>
            <td className={TD}>{r.payment && <Badge tone="danger">{r.payment}</Badge>}</td>
            <td className={MONEY}>0.00 ₺</td>
            <td className="overflow-hidden pt-0.5 pl-[52px]">{r.due}</td>
          </tr>
        ))}
      </tbody>
      <tfoot>
        <tr className="h-[74px] font-bold">
          <td colSpan={9} />
          <td className="px-2.5 text-right">849,360.00 ₺</td>
          <td colSpan={4} />
          <td className="px-2.5 text-right">0.00 ₺</td>
          <td className="overflow-hidden pl-[52px]">388,800.00 ₺</td>
        </tr>
      </tfoot>
    </table>
  );
}

export default function App() {
  return (
    <div className="flex h-screen flex-col overflow-hidden bg-[#f8f9fb] font-['Liberation_Sans',Arial,sans-serif] text-[28px] leading-8 text-[#212529]">
      <Header />
      <div className="flex min-h-0 grow">
        <aside className="relative z-10 w-32 shrink-0 border-r-2 border-[#dee2e6] bg-white shadow-[4px_0_20px_rgb(0_0_0/0.12)]">
          <div className="h-[78px] border-b-2 border-[#dee2e6] pt-[30px] pl-4">
            <button aria-label="Expand sidebar" className="block text-[#6c757d]">
              <svg viewBox="0 0 16 16" fill="none" stroke="currentColor" strokeWidth="2" className="size-4" aria-hidden="true">
                <path d="M1 1l6 7-6 7M8 1l6 7-6 7" />
              </svg>
            </button>
          </div>
          <nav className="pt-4">
            {SIDEBAR.map(({ name, Icon }) => (
              <a
                key={name}
                href={`#${name}`}
                aria-label={name}
                className={name === "Sales" ? "flex h-[102px] items-center justify-center bg-[#d0e2e5]" : "flex h-[102px] items-center justify-center"}
              >
                <Icon className="size-[70px]" />
              </a>
            ))}
          </nav>
        </aside>
        <main className="flex min-w-0 grow flex-col">
          <ControlPanel />
          <QuotationTable />
        </main>
      </div>
      <footer className="relative z-20 flex h-[68px] shrink-0 items-start gap-1 border-t-2 border-[#dbdfe3] bg-[#e8ebee] pt-2 pl-[18px] text-[26px] text-[#495057]">
        {TABS.map(({ name, Icon }) => (
          <button key={name} className="flex h-[52px] items-center gap-3 rounded-t-xl bg-[#dfe2e4] pr-[61px] pl-[18px]">
            <Icon className="size-8" />
            {name}
          </button>
        ))}
        <div className="flex h-[54px] items-center rounded-t-xl border-t-[6px] border-[#ab7a4a] bg-white pr-5 pb-1 pl-[18px] font-bold text-[#212529]">
          <Sales className="size-8" />
          <span className="ml-3">Quotations</span>
          <button aria-label="Close tab" className="ml-[22px] text-[#797c80]"><Cross className="size-[18px] stroke-[3]" /></button>
        </div>
        <button aria-label="New tab" className="mt-3.5 ml-[22px] text-[#797c80]">
          <svg viewBox="0 0 20 20" fill="currentColor" className="size-5" aria-hidden="true"><path d="M7.500 0h5v7.500H20v5h-7.500V20h-5v-7.500H0v-5h7.500z" /></svg>
        </button>
      </footer>
    </div>
  );
}
